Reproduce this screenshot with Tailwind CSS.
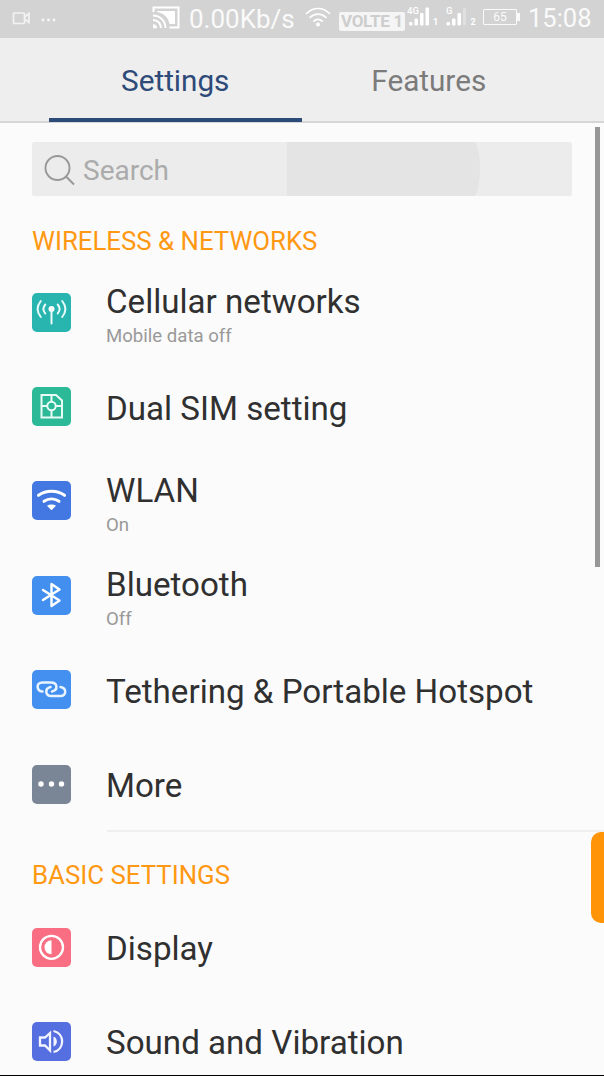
<!DOCTYPE html>
<html lang="en">
<head>
  <meta charset="UTF-8">
  <title>Settings</title>
  <meta name="viewport" content="width=device-width, initial-scale=1.0">
  <script src="https://cdn.jsdelivr.net/npm/@tailwindcss/browser@4"></script>
</head>
<body class="bg-[#fbfbfb] font-['Roboto',sans-serif] overflow-hidden">

<div class="relative w-[604px] h-[1076px] overflow-hidden flex flex-col">

  <!-- Status bar -->
  <header class="h-[38px] shrink-0 bg-[#d3d3d3] text-[#fafafa] flex items-center pl-[12px]">
    <svg class="w-[19px] h-[14px] mt-[-3px] shrink-0" viewBox="0 0 19 14" fill="none" stroke="#f3f3f3" stroke-width="1.700">
      <rect x="1.500" y="2" width="11" height="10.500" rx="1" />
      <path d="M12.500 6l4.500-3.500v9L12.500 8" />
    </svg>
    <svg class="w-[15px] h-[4px] ml-[10px] mt-[1px] shrink-0" viewBox="0 0 15 4" fill="#f6f6f6">
      <circle cx="2" cy="2" r="1.400" /><circle cx="7.500" cy="2" r="1.400" /><circle cx="13" cy="2" r="1.400" />
    </svg>

    <!-- cast -->
    <svg class="w-[28px] h-[23px] ml-[96px] mt-[-3px] shrink-0" viewBox="0 0 28 23" fill="none" stroke="#fff" stroke-width="2">
      <path d="M1.500 6V1.500h25v20H17.500" />
      <path d="M5 6V5h18v13h-5.500C16.500 11.500 11.500 7 5 6z" fill="#fff" stroke="none" />
      <path d="M1 9.500c7 0 12.500 5.500 12.500 12.500M1 14c4.500 0 8 3.500 8 8" />
      <path d="M1 18.200a4 4 0 0 1 4 4H1z" fill="#fff" stroke="none" />
    </svg>
    <span class="ml-[9px] w-[106px] text-[26px] leading-none whitespace-nowrap">0.00Kb/s</span>

    <!-- wifi -->
    <svg class="w-[26px] h-[20px] ml-[10px] mt-[-4px] shrink-0" viewBox="0 0 26 20" fill="none" stroke="#fff" stroke-width="1.700" stroke-linecap="round">
      <path d="M1.500 6.500C8-.2 18-.2 24.500 6.500M5 10.500c4.500-4.500 11.500-4.500 16 0M8.800 14.200c2.500-2.300 5.900-2.300 8.400 0" />
      <circle cx="13" cy="17.500" r="1.200" fill="#fff" />
    </svg>
    <span class="ml-[8px] mt-[4px] w-[66px] h-[19px] rounded-[2px] bg-[#f5f5f5] text-[#cdcdcd] text-[17px] font-bold leading-[19px] text-center tracking-[-0.3px] shrink-0 whitespace-nowrap">VOLTE 1</span>

    <!-- signal 1 -->
    <svg class="w-[34px] h-[22px] ml-[2px] mt-[-5px] shrink-0" viewBox="0 0 34 22" fill="#fff">
      <text x="0" y="8" font-size="9.500" font-weight="500">4G</text>
      <rect x="2" y="16" width="3.500" height="3.500" rx="1" /><rect x="7.500" y="12.500" width="3.500" height="7" rx="1" />
      <rect x="13" y="7" width="3.500" height="12.500" rx="1" /><rect x="18.500" y="1.500" width="3.500" height="18" rx="1" />
      <text x="26" y="19" font-size="9" font-weight="700">1</text>
    </svg>
    <!-- signal 2 -->
    <svg class="w-[34px] h-[22px] ml-[4px] mt-[-5px] shrink-0" viewBox="0 0 34 22" fill="#fff">
      <text x="1" y="8" font-size="9.500" font-weight="500">G</text>
      <rect x="1.500" y="16" width="3.500" height="3.500" rx="1" /><rect x="7" y="12.500" width="3.500" height="7" rx="1" />
      <rect x="12.500" y="7" width="3.500" height="12.500" rx="1" /><rect x="18" y="1.500" width="3" height="18" rx="1" fill="#e0e0e0" />
      <text x="25.500" y="19" font-size="9" font-weight="700">2</text>
    </svg>

    <!-- battery -->
    <div class="ml-[4px] mt-[-4px] flex items-center shrink-0">
      <span class="w-[34px] h-[16px] border-[1.5px] border-[#fafafa] rounded-[1px] text-[12px] leading-[15px] text-center">65</span>
      <span class="w-[3px] h-[8px] bg-[#fafafa]"></span>
    </div>
    <span class="ml-[8px] text-[25.5px] leading-none">15:08</span>
  </header>

  <!-- Tabs -->
  <nav class="h-[85px] shrink-0 bg-[#eeeeee] border-b-2 border-[#d6d6d6] flex px-[48.500px] text-[29.7px]">
    <a href="#" class="w-[253.500px] h-[84px] border-b-[4px] border-[#2d4a78] text-[#2d4a78] flex justify-center items-center pt-[6px]">Settings</a>
    <a href="#" class="w-[253.500px] h-[84px] text-[#7b7b7b] flex justify-center items-center pt-[2px]">Features</a>
  </nav>

  <!-- Search -->
  <div class="relative ml-[32px] mt-[19px] w-[540px] h-[54px] shrink-0 rounded-[2px] bg-[#ececec] overflow-hidden flex items-center">
    <div class="absolute left-[255px] top-0 w-[193px] h-[54px] bg-[#e4e4e4] rounded-r-[6px_27px]"></div>
    <svg class="ml-[12px] mt-[2px] w-[32px] h-[32px] shrink-0" viewBox="0 0 32 32" fill="none" stroke="#989898" stroke-width="1.900">
      <circle cx="13.500" cy="14" r="12" /><path d="M22 22.500l8 8" />
    </svg>
    <span class="ml-[7px] pt-[3px] text-[28px] text-[#ababab]">Search</span>
  </div>

  <h2 class="h-[69px] shrink-0 pl-[32px] pt-[11px] text-[25.8px] leading-[69px] text-[#ff9812] whitespace-nowrap">WIRELESS &amp; NETWORKS</h2>

  <main class="shrink-0 text-[33.150px] leading-[40px] text-[#303030] whitespace-nowrap">
    <div class="h-[94.400px] pl-[32.400px] flex items-center gap-[34.600px]">
      <svg class="w-[39px] h-[39px]" viewBox="0 0 39 39" fill="none" stroke="#e9fbfa" stroke-width="2" stroke-linecap="round">
        <rect width="39" height="39" rx="5" fill="#28b5b0" stroke="none" />
        <circle cx="19.500" cy="16" r="3" fill="#fff" stroke="none" />
        <path d="M19.500 17v13.500M13.300 11.500c-2.300 2.700-2.300 6.300 0 9M25.700 11.500c2.300 2.700 2.300 6.300 0 9M8.800 8c-4 5-4 11 0 16M30.200 8c4 5 4 11 0 16" />
      </svg>
      <div class="pt-[8px]">
        <p>Cellular networks</p>
        <p class="text-[18.600px] leading-[28px] text-[#999999]">Mobile data off</p>
      </div>
    </div>
    <div class="h-[94.400px] pl-[32.400px] flex items-center gap-[34.600px]">
      <svg class="w-[39px] h-[39px]" viewBox="0 0 39 39" fill="none" stroke="#e9fbf5" stroke-width="2">
        <rect width="39" height="39" rx="5" fill="#2bb998" stroke="none" />
        <path d="M9.500 8h14.500l6 5.500v17H9.500z" />
        <circle cx="19.500" cy="19" r="4.200" />
        <path d="M19.500 8v7M19.500 23v7.500M9.500 19h6M23.500 19H30" />
      </svg>
      <p class="pt-[4px]">Dual SIM setting</p>
    </div>
    <div class="h-[94.400px] pl-[32.400px] flex items-center gap-[34.600px]">
      <svg class="w-[39px] h-[39px]" viewBox="0 0 39 39" fill="none" stroke="#fff" stroke-width="3" stroke-linecap="round">
        <rect width="39" height="39" rx="5" fill="#4378e2" stroke="none" />
        <path d="M6.500 14.300c7.500-5.300 18.500-5.300 26 0" /><path d="M12 20.300c4.500-3.200 10.500-3.200 15 0" />
        <path d="M15 24.800c2.500-1.700 6.500-1.700 9 0l-4.500 4.500z" fill="#fff" stroke="none" />
      </svg>
      <div class="pt-[8px]">
        <p>WLAN</p>
        <p class="text-[18.600px] leading-[28px] text-[#999999]">On</p>
      </div>
    </div>
    <div class="h-[94.400px] pl-[32.400px] flex items-center gap-[34.600px]">
      <svg class="w-[39px] h-[39px]" viewBox="0 0 39 39" fill="none" stroke="#fff" stroke-width="2.400" stroke-linejoin="round" stroke-linecap="round">
        <rect width="39" height="39" rx="5" fill="#438ff0" stroke="none" />
        <path d="M11 14l16.500 10.500-8 5.500V8l8 5.500L11 24" />
      </svg>
      <div class="pt-[8px]">
        <p>Bluetooth</p>
        <p class="text-[18.600px] leading-[28px] text-[#999999]">Off</p>
      </div>
    </div>
    <div class="h-[94.400px] pl-[32.400px] flex items-center gap-[34.600px]">
      <svg class="w-[39px] h-[39px]" viewBox="0 0 39 39" fill="none" stroke="#eaf4ff" stroke-width="2.500" stroke-linecap="round">
        <rect width="39" height="39" rx="5" fill="#4490f1" stroke="none" />
        <path d="M10.500 21.500C4 20.500 4 12.500 10.500 12.500H19c6.500 0 7.500 7.500 1 9" />
        <path d="M28.500 17c6.500 1 6 9 0 9h-9c-6.500 0-7-7.500-1-9" />
      </svg>
      <p class="pt-[4px]">Tethering &amp; Portable Hotspot</p>
    </div>
    <div class="h-[94.400px] pl-[32.400px] flex items-center gap-[34.600px]">
      <svg class="w-[39px] h-[39px]" viewBox="0 0 39 39" fill="#fff">
        <rect width="39" height="39" rx="5" fill="#7a8696" />
        <circle cx="9" cy="19" r="2.700" /><circle cx="19.500" cy="19" r="2.700" /><circle cx="29.500" cy="19" r="2.700" />
      </svg>
      <p class="pt-[4px]">More</p>
    </div>

    <h2 class="-mt-px ml-[107px] border-t-2 border-[#efefef] h-[70px] text-[25.8px] leading-[87px] text-[#ff9812]"><span class="-ml-[75px]">BASIC SETTINGS</span></h2>

    <div class="h-[94.400px] pl-[32.400px] flex items-center gap-[34.600px]">
      <svg class="w-[39px] h-[39px]" viewBox="0 0 39 39" fill="none" stroke="#fff" stroke-width="2.300">
        <rect width="39" height="39" rx="5" fill="#f96e82" stroke="none" />
        <circle cx="19.500" cy="19.300" r="11.500" />
        <path d="M19.500 12.300v14a7 7 0 0 1 0-14z" fill="#fff" stroke="none" />
      </svg>
      <p class="pt-[3px]">Display</p>
    </div>
    <div class="h-[94.400px] pl-[32.400px] flex items-center gap-[34.600px]">
      <svg class="w-[39px] h-[39px]" viewBox="0 0 39 39" fill="none" stroke="#f2f4ff" stroke-width="2.300">
        <rect width="39" height="39" rx="5" fill="#566fe0" stroke="none" />
        <path d="M8 15.500h5l5-4.500v17.500l-5-5H8z" />
        <path d="M21.500 14.500c4.500 1.500 4.500 8.500 0 10z" fill="#f2f4ff" stroke="none" />
        <path d="M21.500 9c11.500 2.500 11.500 18.500 0 21" />
      </svg>
      <p class="pt-[2px]">Sound and Vibration</p>
    </div>
  </main>

  <!-- Scrollbar, edge handle, bottom line -->
  <div class="absolute left-[595px] top-[127px] w-[5px] h-[440px] bg-[#979797]"></div>
  <div class="absolute left-[591px] top-[832px] w-[24px] h-[91px] rounded-[10px] bg-[#ff9408]"></div>
  <div class="absolute left-0 bottom-0 w-full h-px bg-black"></div>
</div>

</body>
</html>
